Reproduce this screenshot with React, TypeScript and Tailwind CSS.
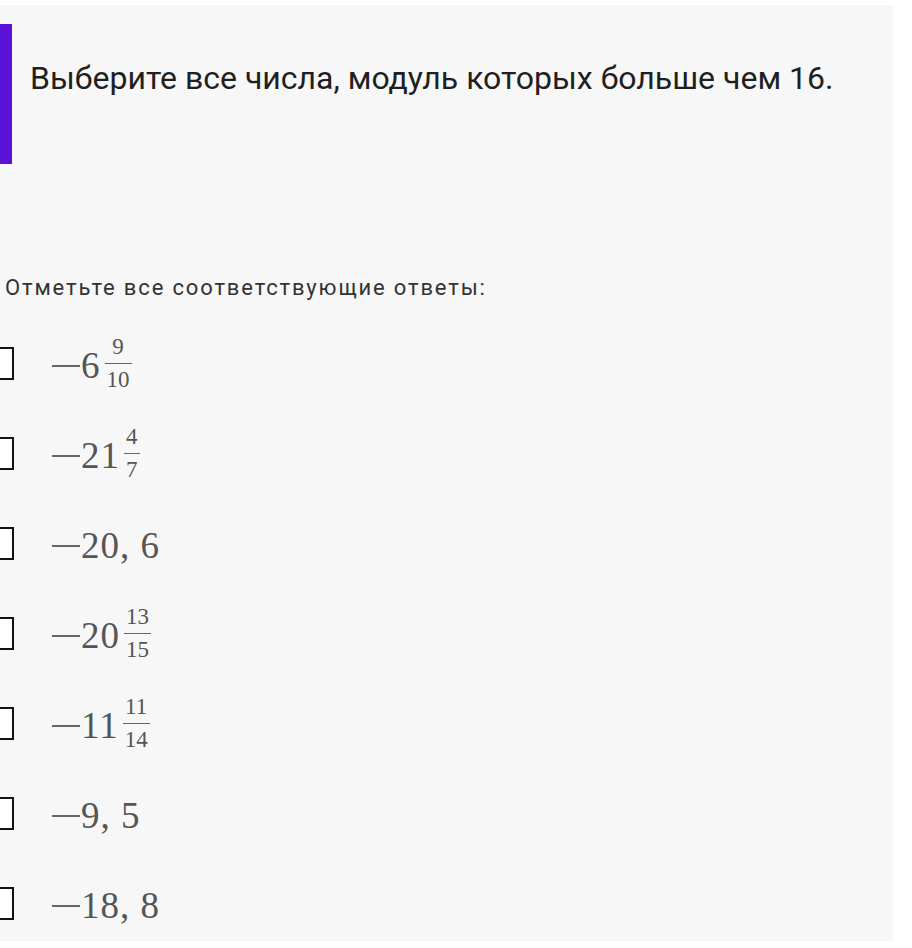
import React from "react";

type Opt = { whole: string; num?: string; den?: string };

const opts: Opt[] = [
  { whole: "6", num: "9", den: "10" },
  { whole: "21", num: "4", den: "7" },
  { whole: "20, 6" },
  { whole: "20", num: "13", den: "15" },
  { whole: "11", num: "11", den: "14" },
  { whole: "9, 5" },
  { whole: "18, 8" },
];

function MathVal({ o }: { o: Opt }) {
  return (
    <div className="flex items-center text-[#555] font-['Liberation_Serif',serif]">
      <span className="w-[28px] h-[2px] bg-[#666] mr-[1px] mt-[1px]"></span>
      <span className="text-[37px] leading-none tracking-[1px]">{o.whole}</span>
      {o.num && (
        <span className="ml-[4px] flex flex-col items-center text-[23px] leading-none mb-[4px]">
          <span className="px-[2px] pb-[5px]">{o.num}</span>
          <span className="h-[1.5px] w-full bg-[#666]"></span>
          <span className="px-[2px] pt-[4px]">{o.den}</span>
        </span>
      )}
    </div>
  );
}

export default function App() {
  return (
    <div className="w-[912px] h-[948px] bg-white pt-[5px] overflow-hidden">
      <div className="w-[893px] h-[936px] bg-[#f7f7f7] overflow-hidden">
        <div className="flex pt-[19px]">
          <div className="w-[12px] h-[140px] bg-[#5a10d6] shrink-0"></div>
          <div className="ml-[18px] mt-[38px] text-[32px] leading-none text-[#1f1f1f] font-['Roboto',sans-serif]">
            Выберите все числа, модуль которых больше чем 16.
          </div>
        </div>
        <div className="mt-[113px] pl-[5px] text-[22px] leading-none text-[#333] tracking-[1.85px] font-['Roboto',sans-serif]">
          Отметьте все соответствующие ответы:
        </div>
        <div className="mt-[19px] flex flex-col">
          {opts.map((o, i) => (
            <div key={i} className="h-[90px] flex items-center">
              <div className="ml-[-19px] w-[33px] h-[33px] border-2 border-[#111] bg-white shrink-0"></div>
              <div className="ml-[38px] mt-[4px]">
                <MathVal o={o} />
              </div>
            </div>
          ))}
        </div>
      </div>
    </div>
  );
}
